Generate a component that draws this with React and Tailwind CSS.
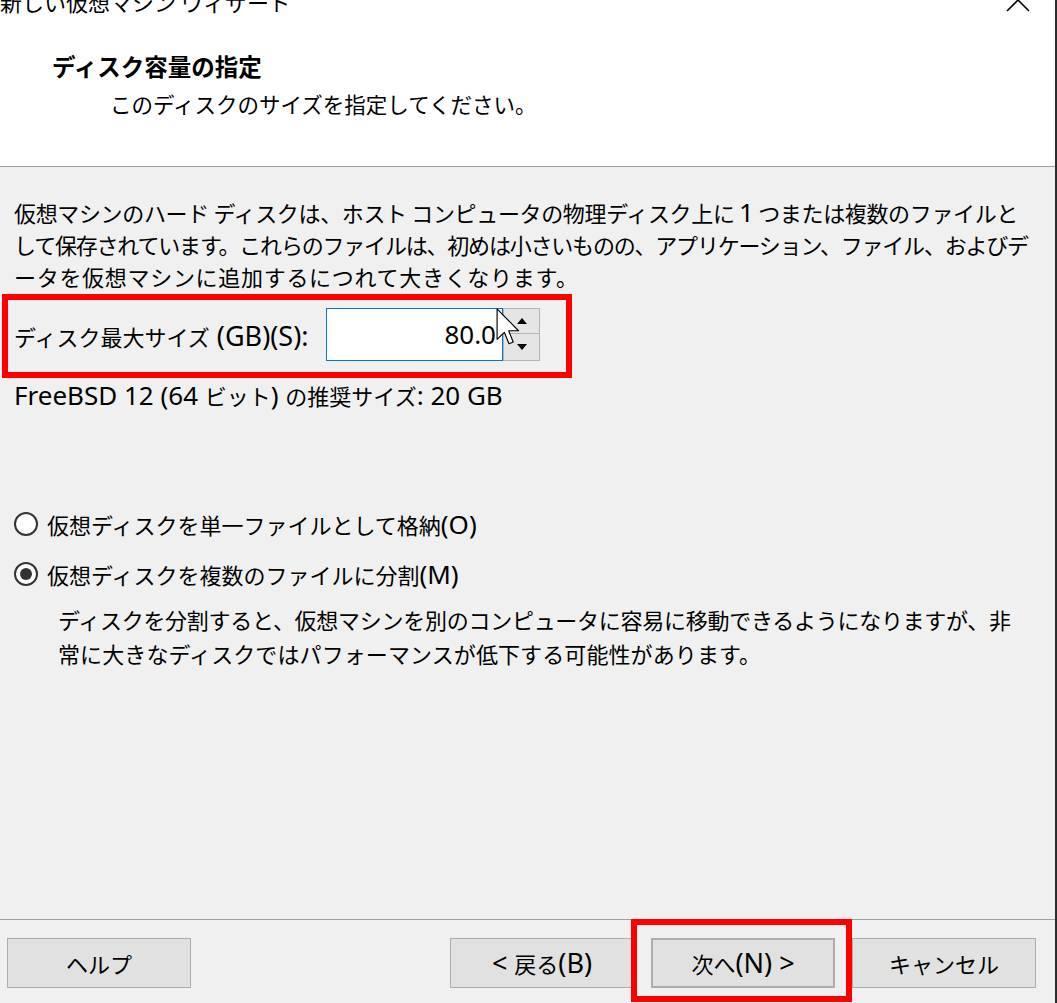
// Latin runs are drawn a little larger than the Japanese text, as in the Windows dialog
function L({ children, className = 'text-[26px]' }) {
  return <span className={`font-['Noto_Sans',sans-serif] ${className}`}>{children}</span>;
}

function Radio({ checked, children }) {
  return (
    <div className="flex h-[36px] items-center">
      <span className="ml-[14px] flex h-[24px] w-[24px] items-center justify-center rounded-full border-2 border-[#333] bg-white">
        {checked && <span className="h-[12px] w-[12px] rounded-full bg-[#333]" />}
      </span>
      <span className="ml-[9px] whitespace-nowrap text-[22px] leading-[36px]">{children}</span>
    </div>
  );
}

function WinButton({ children, className = '' }) {
  return (
    <button
      type="button"
      className={`flex h-[50px] w-[184px] shrink-0 items-center justify-center border border-[#adadad] bg-[#e1e1e1] text-[22px] leading-[30px] ${className}`}
    >
      <span className="whitespace-pre">{children}</span>
    </button>
  );
}

export default function App() {
  return (
    <div className="relative flex h-[1003px] w-[1057px] flex-col overflow-hidden border-r-2 border-[#2b2b2b] bg-[#f0f0f0] font-['Noto_Sans_CJK_JP',sans-serif] text-black">
      {/* Header */}
      <div className="relative h-[167px] shrink-0 border-b border-[#a0a0a0] bg-white">
        <div className="mt-[-12px] h-[26px] whitespace-nowrap text-[22px] leading-[26px]">新しい仮想マシン ウィザード</div>
        <svg className="absolute left-[1006px] top-[-12px]" width="24" height="24" viewBox="0 0 24 24">
          <path d="M1 1 L23 23 M23 1 L1 23" stroke="#000" strokeWidth="1.6" fill="none" />
        </svg>
        <h1 className="ml-[52px] mt-[37px] text-[23.5px] font-bold leading-[30px]">ディスク容量の指定</h1>
        <p className="ml-[110px] mt-[8px] text-[21.5px] leading-[30px]">このディスクのサイズを指定してください。</p>
      </div>

      {/* Body */}
      <div className="flex-1 pt-[29px]">
        <div className="ml-[14px] whitespace-nowrap text-[22px] leading-[32px]">
          <div className="tracking-[-0.35px]">
            仮想マシンのハード ディスクは、ホスト コンピュータの物理ディスク上に <L>1</L> つまたは複数のファイルと
          </div>
          <div className="tracking-[-1.2px]">
            して保存されています。これらのファイルは、初めは小さいものの、アプリケーション、ファイル、およびデ
          </div>
          <div className="tracking-[0.7px]">ータを仮想マシンに追加するにつれて大きくなります。</div>
        </div>

        {/* Disk size row (highlighted) */}
        <div className="ml-[2px] mt-[2px] flex h-[84px] w-[570px] items-center border-[6px] border-[#ff0000] pl-[6px]">
          <span className="whitespace-nowrap text-[22px] leading-[32px]">
            ディスク最大サイズ<L className="text-[27px]"> (GB)(S):</L>
          </span>
          <div className="absolute left-[326px] top-[308px] flex">
            <div className="flex h-[53px] w-[177px] items-center justify-end border border-[#0078d7] bg-white pr-[6px] font-['Noto_Sans',sans-serif] text-[26px]">
              80.0
            </div>
            <div className="flex h-[53px] w-[37px] flex-col">
              <div className="flex h-[26px] items-center justify-center border border-[#b4b4b4] bg-[#e5e5e5]">
                <svg width="10" height="6" viewBox="0 0 10 6"><path d="M0 6 L5 0 L10 6 Z" fill="#000" /></svg>
              </div>
              <div className="flex h-[27px] items-center justify-center border border-t-0 border-[#b4b4b4] bg-[#e5e5e5]">
                <svg width="10" height="6" viewBox="0 0 10 6"><path d="M0 0 L10 0 L5 6 Z" fill="#000" /></svg>
              </div>
            </div>
          </div>
        </div>

        <p className="ml-[14px] mt-[1px] whitespace-nowrap text-[22px] leading-[32px]">
          <L>FreeBSD 12 (64 </L>ビット<L>) </L>の推奨サイズ<L>: 20 GB</L>
        </p>

        <div className="mt-[95px]">
          <Radio>
            仮想ディスクを単一ファイルとして格納<L>(O)</L>
          </Radio>
        </div>
        <div className="mt-[14px]">
          <Radio checked>
            仮想ディスクを複数のファイルに分割<L>(M)</L>
          </Radio>
        </div>
        <div className="ml-[58px] mt-[10px] whitespace-nowrap text-[22px] leading-[34px]">
          <div className="tracking-[-0.27px]">
            ディスクを分割すると、仮想マシンを別のコンピュータに容易に移動できるようになりますが、非
          </div>
          <div className="tracking-[0.1px]">常に大きなディスクではパフォーマンスが低下する可能性があります。</div>
        </div>
      </div>

      {/* Footer */}
      <div className="flex h-[84px] shrink-0 items-start border-t border-[#a0a0a0] pt-[18px]">
        <WinButton className="ml-[7px]">ヘルプ</WinButton>
        <WinButton className="ml-[259px]">
          <L className="text-[27px]">&lt; </L>戻る<L className="text-[27px]">(B)</L>
        </WinButton>
        <WinButton className="ml-[17px] border-2 border-[#0078d7]">
          次へ<L className="text-[27px]">(N) &gt;</L>
        </WinButton>
        <WinButton className="ml-[17px]">キャンセル</WinButton>
      </div>

      {/* Annotation around the Next button */}
      <div className="pointer-events-none absolute left-[631px] top-[919px] h-[83px] w-[221px] border-[6px] border-[#ff0000]" />

      {/* Mouse cursor */}
      <svg className="pointer-events-none absolute left-[496px] top-[308px]" width="24" height="37" viewBox="0 0 12.5 19.5">
        <path d="M0.5 0.5 L0.5 16.5 L4.3 12.8 L6.8 18.8 L9 17.9 L6.6 12 L11.8 12 Z" fill="#fff" stroke="#000" strokeWidth="0.6" strokeLinejoin="round" />
      </svg>
    </div>
  );
}
